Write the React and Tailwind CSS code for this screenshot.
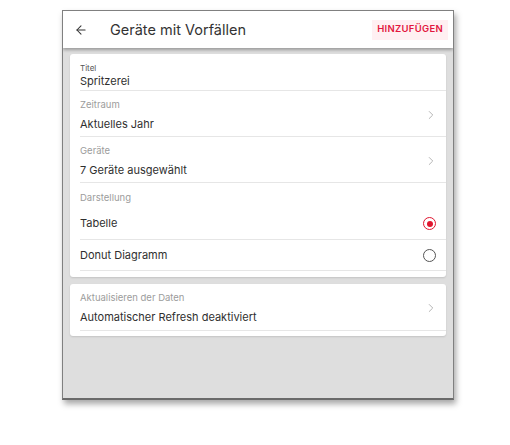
import { ArrowLeft, ChevronRight } from "lucide-react";

const font = { fontFamily: "Inter, 'Noto Sans', sans-serif" };

const NavRow = ({ label, value }) => (
  <div className="ml-[10px] h-[46px] flex items-center border-b border-[#e6e6e6] pr-[8px] pt-[3px]">
    <div className="flex-1 flex flex-col">
      <span className="text-[9.5px] leading-[14px] text-[#9c9c9c]">{label}</span>
      <span className="text-[11px] leading-[16px] text-[#2f2f2f] mt-[4px]">{value}</span>
    </div>
    <ChevronRight className="w-[14px] h-[14px] text-[#aaaaaa]" strokeWidth={1.5} />
  </div>
);

const RadioRow = ({ label, checked, last }) => (
  <div className={`ml-[10px] flex items-center border-b border-[#e6e6e6] pr-[10px] ${last ? "h-[31px]" : "h-[32px]"}`}>
    <span className="flex-1 text-[11px] text-[#2f2f2f]">{label}</span>
    {checked ? (
      <span className="w-[13px] h-[13px] rounded-full border-[1.5px] border-[#e0162f] flex items-center justify-center">
        <span className="w-[6px] h-[6px] rounded-full bg-[#e0162f]" />
      </span>
    ) : (
      <span className="w-[13px] h-[13px] rounded-full border-[1.5px] border-[#555]" />
    )}
  </div>
);

export default function App() {
  return (
    <div className="w-[510px] h-[445px] bg-white pt-[10px] pl-[62px]" style={font}>
      <div className="w-[392px] h-[390px] flex flex-col bg-[#dedede] border border-[#808080] border-b-[2px] border-b-[#6a6a6a] shadow-[2px_4px_6px_rgba(0,0,0,0.35)] overflow-hidden">
        <header className="h-[37px] shrink-0 bg-white flex items-center pl-[11px] pr-[5px] shadow-[0_2px_3px_rgba(0,0,0,0.3)] relative z-10">
          <ArrowLeft className="w-[14px] h-[14px] text-[#333]" strokeWidth={1.8} />
          <h1 className="ml-[22px] flex-1 text-[14.5px] text-[#333]">Geräte mit Vorfällen</h1>
          <button className="h-[20px] px-[5px] bg-[#fff0f2] text-[#e3173e] text-[9.5px] font-semibold tracking-[0.3px]">
            HINZUFÜGEN
          </button>
        </header>

        <div className="flex-1 pl-[7px] pr-[7px] pt-[6px] flex flex-col gap-[7px]">
          <section className="bg-white rounded-[3px] shadow-[0_1px_2px_rgba(0,0,0,0.12)] pb-[6px]">
            <div className="ml-[10px] h-[37px] flex flex-col justify-end pb-[1px] border-b border-[#e6e6e6]">
              <span className="text-[8px] leading-[10px] text-[#555]">Titel</span>
              <span className="text-[11px] leading-[16px] text-[#2f2f2f]">Spritzerei</span>
            </div>
            <NavRow label="Zeitraum" value="Aktuelles Jahr" />
            <NavRow label="Geräte" value="7 Geräte ausgewählt" />
            <div className="ml-[10px] h-[25px] pt-[8px]">
              <span className="block text-[9.5px] leading-[14px] text-[#9c9c9c]">Darstellung</span>
            </div>
            <RadioRow label="Tabelle" checked />
            <RadioRow label="Donut Diagramm" last />
          </section>

          <section className="bg-white rounded-[3px] shadow-[0_1px_2px_rgba(0,0,0,0.12)] pb-[5px]">
            <div className="ml-[10px] h-[47px] flex items-center border-b border-[#e6e6e6] pr-[8px] pt-[2px]">
              <div className="flex-1 flex flex-col">
                <span className="text-[9.5px] leading-[14px] text-[#9c9c9c]">Aktualisieren der Daten</span>
                <span className="text-[11px] leading-[16px] text-[#2f2f2f] mt-[4px]">Automatischer Refresh deaktiviert</span>
              </div>
              <ChevronRight className="w-[14px] h-[14px] text-[#aaaaaa]" strokeWidth={1.5} />
            </div>
          </section>
        </div>
      </div>
    </div>
  );
}
